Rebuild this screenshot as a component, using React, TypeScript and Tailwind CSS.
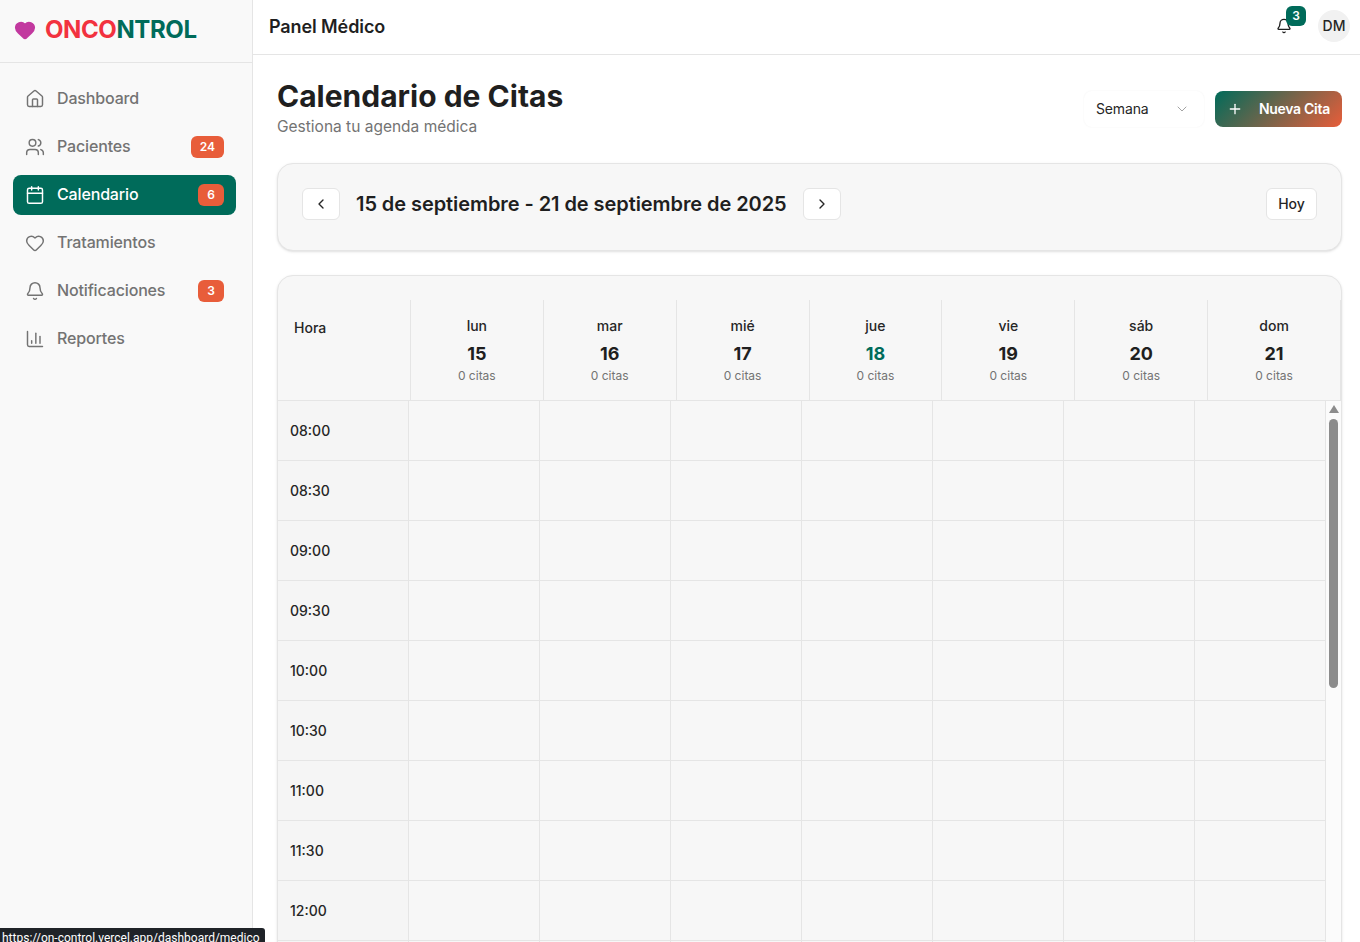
import { BarChart3, Bell, Calendar, ChevronDown, ChevronLeft, ChevronRight, Heart, Home, Plus, Users } from "lucide-react";

const navItems = [
    { label: "Dashboard", icon: Home },
    { label: "Pacientes", icon: Users, badge: "24" },
    { label: "Calendario", icon: Calendar, badge: "6", active: true },
    { label: "Tratamientos", icon: Heart },
    { label: "Notificaciones", icon: Bell, badge: "3" },
    { label: "Reportes", icon: BarChart3 },
];

const days = [
    { name: "lun", num: "15" },
    { name: "mar", num: "16" },
    { name: "mié", num: "17" },
    { name: "jue", num: "18", today: true },
    { name: "vie", num: "19" },
    { name: "sáb", num: "20" },
    { name: "dom", num: "21" },
];

const hours = ["08:00", "08:30", "09:00", "09:30", "10:00", "10:30", "11:00", "11:30", "12:00", "12:30"];

function Sidebar() {
    return (
        <aside className="w-[253px] shrink-0 border-r border-[#e5e5e5] bg-[#f9f9f9]">
            <div className="flex h-[63px] items-center gap-[9px] border-b border-[#e5e5e5] pb-[3px] pl-[14px]">
                <Heart className="size-[22px] fill-[#c2399f] text-[#c2399f]" />
                <span className="text-[24px] leading-8 font-bold tracking-[-0.4px]">
                    <span className="text-[#f2323f]">ONCO</span>
                    <span className="text-[#006b5a]">NTROL</span>
                </span>
            </div>
            <nav className="flex flex-col gap-2 pt-4 pr-4 pl-[13px]">
                {navItems.map((item) => (
                    <div
                        key={item.label}
                        className={`flex h-10 items-center rounded-lg px-3 text-[16px] font-medium tracking-[-0.15px] ${item.active ? "bg-[#006b5a] text-white" : "text-[#737373]"}`}
                    >
                        <item.icon className="size-5" strokeWidth={1.75} />
                        <span className="ml-[12px] flex-1 pb-[2px]">{item.label}</span>
                        {item.badge && (
                            <span className="flex h-[22px] min-w-[25px] items-center justify-center rounded-md bg-[#e85d3a] px-[9px] text-xs font-semibold tracking-normal text-white">
                                {item.badge}
                            </span>
                        )}
                    </div>
                ))}
            </nav>
        </aside>
    );
}

function Header() {
    return (
        <header className="flex h-[55px] shrink-0 items-center justify-between border-b border-[#e5e5e5] bg-white pr-[10px] pb-[2px] pl-4">
            <h2 className="text-[18px] font-semibold tracking-[-0.1px] text-[#1f1f1f]">Panel Médico</h2>
            <div className="flex items-center gap-[26px]">
                <div className="relative">
                    <Bell className="size-4 text-[#1f1f1f]" strokeWidth={2} />
                    <span className="absolute -top-3 left-[10px] flex h-5 w-5 items-center justify-center rounded-md bg-[#006b5a] text-xs font-semibold text-white">
                        3
                    </span>
                </div>
                <div className="flex size-8 items-center justify-center rounded-full bg-[#f1f1f1] text-sm font-medium text-[#262626]">
                    DM
                </div>
            </div>
        </header>
    );
}

function CalendarGrid() {
    return (
        <div className="mt-6 rounded-2xl border border-[#e5e5e5] bg-[#f7f7f7] pt-6 shadow-sm">
            <div className="grid h-[101px] grid-cols-[repeat(8,132.88px)] border-b border-[#e5e5e5]">
                <div className="border-r border-[#e5e5e5] pt-[18px] pl-4 text-sm font-medium text-[#262626]">Hora</div>
                {days.map((d) => (
                    <div key={d.num} className="flex flex-col items-center border-r border-[#e5e5e5] pt-4">
                        <span className="text-sm leading-5 font-medium text-[#262626]">{d.name}</span>
                        <span className={`mt-1 text-[18px] leading-7 font-bold ${d.today ? "text-[#006b5a]" : "text-[#1f1f1f]"}`}>{d.num}</span>
                        <span className="text-xs leading-4 text-[#737373]">0 citas</span>
                    </div>
                ))}
            </div>
            <div className="flex">
                <div className="w-[1048px] shrink-0">
                    {hours.map((h) => (
                        <div key={h} className="grid h-[60px] grid-cols-[repeat(8,131px)] border-b border-[#e5e5e5]">
                            <div className="border-r border-[#e5e5e5] bg-[#f5f5f5] pt-5 pl-3 text-sm leading-5 font-medium text-[#262626]">{h}</div>
                            {days.map((d) => (
                                <div key={d.num} className="border-r border-[#e5e5e5]" />
                            ))}
                        </div>
                    ))}
                </div>
                <div className="flex w-[15px] shrink-0 flex-col items-center bg-[#fbfbfb] pt-1">
                    <div className="h-0 w-0 border-x-[5px] border-b-[8px] border-x-transparent border-b-[#8c8c8c]" />
                    <div className="mt-[6px] h-[269px] w-[9px] rounded-full bg-[#8c8c8c]" />
                </div>
            </div>
        </div>
    );
}

export default function App() {
    return (
        <div className="relative flex h-[942px] w-[1360px] overflow-hidden bg-white font-['Inter',sans-serif]">
            <Sidebar />
            <div className="flex min-w-0 flex-1 flex-col">
                <Header />
                <main className="flex-1 overflow-hidden pt-[23px] pr-[18px] pl-6">
                    <div className="flex items-start justify-between">
                        <div>
                            <h1 className="text-[30px] leading-9 font-bold text-[#1f1f1f]">Calendario de Citas</h1>
                            <p className="mt-[3px] text-[15.5px] leading-5 text-[#737373]">Gestiona tu agenda médica</p>
                        </div>
                        <div className="mt-[13px] flex items-center gap-[11px]">
                            <div className="flex h-9 w-[120px] items-center justify-between rounded-lg bg-white pr-[14px] pl-3 text-sm tracking-[-0.15px] text-[#262626] shadow-[0_0_2px_rgba(0,0,0,0.06)]">
                                Semana
                                <ChevronDown className="size-4 text-[#a3a3a3]" strokeWidth={1.5} />
                            </div>
                            <div className="flex h-9 w-[127px] items-center rounded-lg bg-[linear-gradient(135deg,#006b5a,#e85d3a)] pl-3 text-sm font-semibold tracking-[-0.3px] text-white">
                                <Plus className="size-4" strokeWidth={2} />
                                <span className="ml-4">Nueva Cita</span>
                            </div>
                        </div>
                    </div>
                    <div className="mt-[26px] flex h-[88px] items-start justify-between rounded-2xl border border-[#e5e5e5] bg-[#f7f7f7] px-6 pt-6 shadow-sm">
                        <div className="flex items-center">
                            <div className="flex h-8 w-[38px] items-center justify-center rounded-md border border-[#e5e5e5] bg-white">
                                <ChevronLeft className="size-4 text-[#262626]" strokeWidth={2} />
                            </div>
                            <span className="ml-4 text-[20px] font-semibold tracking-[-0.07px] text-[#1f1f1f]">15 de septiembre - 21 de septiembre de 2025</span>
                            <div className="ml-4 flex h-8 w-[38px] items-center justify-center rounded-md border border-[#e5e5e5] bg-white">
                                <ChevronRight className="size-4 text-[#262626]" strokeWidth={2} />
                            </div>
                        </div>
                        <div className="flex h-8 w-[51px] items-center justify-center rounded-md border border-[#e5e5e5] bg-white text-sm font-medium text-[#262626]">Hoy</div>
                    </div>
                    <CalendarGrid />
                </main>
            </div>
            <div className="absolute bottom-0 left-0 h-[14px] w-[265px] overflow-hidden rounded-tr-[3px] bg-[#1f2328] pl-[2px] font-['Roboto',sans-serif] text-[12px] leading-[20px] whitespace-nowrap text-white">
                https://on-control.vercel.app/dashboard/medico
            </div>
        </div>
    );
}
